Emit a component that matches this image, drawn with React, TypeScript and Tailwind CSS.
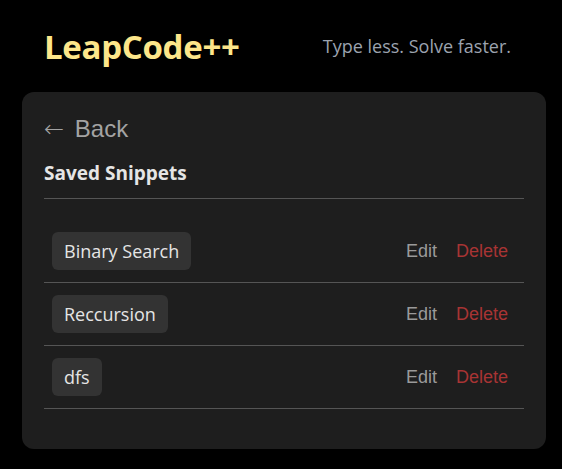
const snippets = ['Binary Search', 'Reccursion', 'dfs'];

const App = () => {
  return (
    <div className="min-h-screen bg-black pb-5 pl-[22px] pr-4 font-['Open_Sans',sans-serif]">
      <header className="flex h-[92px] items-center justify-between pl-[22px] pr-[35px]">
        <h1 className="text-[33px] font-bold leading-none text-[#fde68a] tracking-[-0.3px]">LeapCode++</h1>
        <p className="text-[18px] text-[#9ca3af]">Type less. Solve faster.</p>
      </header>

      <main className="rounded-xl bg-[#1e1e1e] px-[22px] pb-10 pt-[21px]">
        <button className="font-['Liberation_Sans',sans-serif] text-[24px] leading-8 text-[#a3a3a3]">
          <span className="mr-1 font-['DejaVu_Sans',sans-serif] font-light">←</span> Back
        </button>
        <h2 className="mt-[14px] text-[19px] font-bold leading-7 text-[#e5e5e5]">Saved Snippets</h2>
        <hr className="mt-[11px] border-[#555]" />

        <ul className="mt-[21px]">
          {snippets.map((name) => (
            <li key={name} className="flex items-center justify-between border-b border-[#555] py-3 pl-2 pr-4">
              <span className="flex h-[38px] items-center rounded-md bg-[#333] px-3 text-[18px] text-[#e5e5e5]">
                {name}
              </span>
              <div className="flex gap-[19px] font-['Liberation_Sans',sans-serif] text-[18px]">
                <button className="text-[#9a9a9a]">Edit</button>
                <button className="text-[#a83434]">Delete</button>
              </div>
            </li>
          ))}
        </ul>
      </main>
    </div>
  );
};

export default App;
